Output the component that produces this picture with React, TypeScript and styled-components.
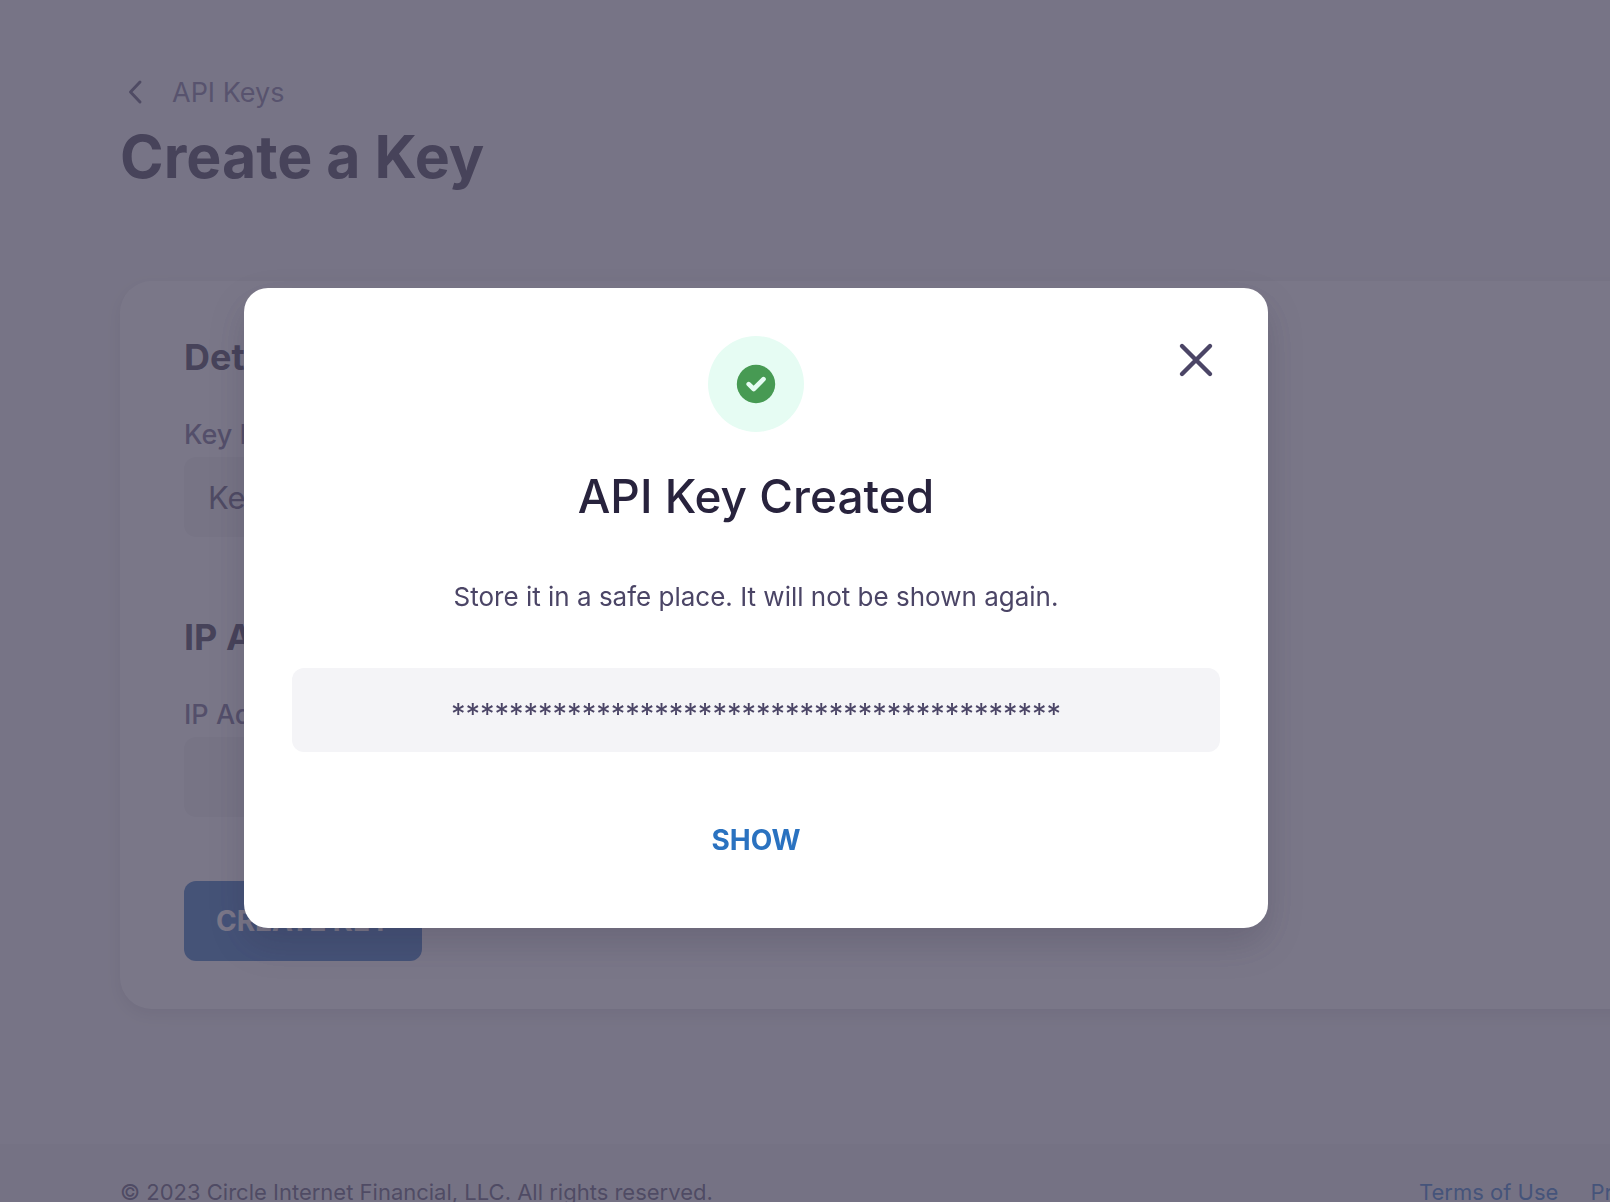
import React, { useState } from "react";
import styled, { createGlobalStyle } from "styled-components";

const GlobalStyle = createGlobalStyle`
  *, *::before, *::after { box-sizing: border-box; }
  body {
    margin: 0;
    overflow: hidden;
    background: #f3f3f5;
    color: #28233d;
    font-family: Inter, "Noto Sans", sans-serif;
  }
  h1, h2, p { margin: 0; }
  button, input { font: inherit; }
`;

const Page = styled.div`
  display: flex;
  flex-direction: column;
  min-width: 1856px;
  min-height: 100vh;
`;

const Main = styled.main`
  padding: 73px 120px 135px;
`;

const BackLink = styled.a`
  display: inline-flex;
  align-items: center;
  gap: 20px;
  color: #6e6890;
  font-size: 27px;
  line-height: 40px;
  text-decoration: none;
`;

const PageTitle = styled.h1`
  margin-top: 8px;
  font-size: 59px;
  font-weight: 700;
  line-height: 72px;
`;

const Card = styled.form`
  margin-top: 88px;
  padding: 54px 64px 48px;
  border-radius: 32px;
  background: #fff;
  box-shadow: 0 6px 16px rgba(40, 35, 61, 0.14);
`;

const Section = styled.section`
  & + & { margin-top: 78px; }
`;

const SectionTitle = styled.h2`
  font-size: 36px;
  font-weight: 700;
  line-height: 44px;
`;

const Label = styled.label`
  display: block;
  margin: 40px 0 6px;
  color: #5d5680;
  font-size: 27px;
  font-weight: 500;
  line-height: 32px;
`;

const TextInput = styled.input`
  display: block;
  width: 100%;
  max-width: 960px;
  height: 80px;
  padding: 0 24px;
  border: 0;
  border-radius: 12px;
  background: #f0f0f2;
  font-size: 31px;
  &::placeholder { color: #4b4566; opacity: 1; }
`;

const Button = styled.button<{ $variant: "primary" | "text" }>`
  height: 80px;
  padding: 0 32px;
  border: 0;
  border-radius: 12px;
  background: ${(p) => (p.$variant === "primary" ? "#2065b8" : "transparent")};
  color: ${(p) => (p.$variant === "primary" ? "#fff" : "#2a72c0")};
  font-size: 28px;
  font-weight: 700;
  cursor: pointer;
`;

const SubmitButton = styled(Button)`
  display: block;
  margin-top: 64px;
`;

const Footer = styled.footer`
  display: flex;
  flex: 1;
  justify-content: space-between;
  padding: 32px 120px;
  background: #ebebee;
  color: #4b4566;
  font-size: 22px;
  line-height: 32px;
`;

const FooterNav = styled.nav`
  display: flex;
  gap: 32px;
`;

const FooterLink = styled.a`
  color: #2069c4;
  text-decoration: none;
`;

const Overlay = styled.div`
  position: fixed;
  inset: 0;
  display: flex;
  align-items: center;
  justify-content: center;
  padding: 14px 98px 0 0;
  background: rgba(81, 77, 100, 0.765);
`;

const Dialog = styled.div`
  position: relative;
  display: flex;
  flex-direction: column;
  align-items: center;
  width: 1024px;
  max-width: 90%;
  padding: 48px;
  border-radius: 24px;
  background: #fff;
  box-shadow: 0 16px 36px rgba(40, 35, 61, 0.2);
`;

const CloseButton = styled.button`
  position: absolute;
  top: 48px;
  right: 48px;
  display: grid;
  place-items: center;
  width: 48px;
  height: 48px;
  padding: 0;
  border: 0;
  background: none;
  color: #4b4566;
  cursor: pointer;
`;

const StatusBadge = styled.div`
  display: grid;
  place-items: center;
  width: 96px;
  height: 96px;
  border-radius: 50%;
  background: #e6fcf3;
`;

const DialogTitle = styled.h2`
  margin-top: 33px;
  color: #28233d;
  font-size: 46px;
  font-weight: 500;
  line-height: 62px;
`;

const DialogText = styled.p`
  margin-top: 49px;
  color: #4b4566;
  font-size: 26px;
  line-height: 42px;
`;

const KeyBox = styled.div`
  align-self: stretch;
  height: 84px;
  margin: 50px 0 48px;
  padding-top: 8px;
  overflow: hidden;
  border-radius: 12px;
  background: #f4f4f7;
  color: #4b4566;
  font-size: 29px;
  line-height: 76px;
  text-align: center;
`;

const MASKED_KEY = "*".repeat(42);

export default function App() {
  const [open, setOpen] = useState(true);
  return (
    <>
      <GlobalStyle />
      <Page>
        <Main>
          <BackLink href="#api-keys">
            <svg width="32" height="32" viewBox="0 0 32 32" fill="none" stroke="#4b4566" strokeWidth="3" strokeLinecap="round" strokeLinejoin="round" aria-hidden="true">
              <path d="M20 5 10.500 15 20 25" />
            </svg>
            API Keys
          </BackLink>
          <PageTitle>Create a Key</PageTitle>
          <Card onSubmit={(e) => e.preventDefault()}>
            <Section>
              <SectionTitle>Details</SectionTitle>
              <Label htmlFor="key-name">Key Name</Label>
              <TextInput id="key-name" placeholder="Key Name" />
            </Section>
            <Section>
              <SectionTitle>IP Allowlist</SectionTitle>
              <Label htmlFor="ip-address">IP Addresses</Label>
              <TextInput id="ip-address" />
            </Section>
            <SubmitButton $variant="primary" type="submit">CREATE KEY</SubmitButton>
          </Card>
        </Main>
        <Footer>
          <p>© 2023 Circle Internet Financial, LLC. All rights reserved.</p>
          <FooterNav>
            <FooterLink href="#terms">Terms of Use</FooterLink>
            <FooterLink href="#privacy">Privacy Policy</FooterLink>
          </FooterNav>
        </Footer>
      </Page>
      {open && (
        <Overlay>
          <Dialog role="dialog" aria-modal="true" aria-labelledby="dialog-title">
            <CloseButton type="button" aria-label="Close" onClick={() => setOpen(false)}>
              <svg width="48" height="48" viewBox="0 0 48 48" fill="none" stroke="currentColor" strokeWidth="4.400" strokeLinecap="round" aria-hidden="true">
                <path d="M10 10 38 38M38 10 10 38" />
              </svg>
            </CloseButton>
            <StatusBadge>
              <svg width="40" height="40" viewBox="0 0 40 40" fill="none" aria-hidden="true">
                <circle cx="20" cy="20" r="19.200" fill="#479a53" />
                <path d="M12.700 20.200 17.700 25 27.500 15.200" stroke="#e6fcf3" strokeWidth="4.600" strokeLinecap="round" strokeLinejoin="round" />
              </svg>
            </StatusBadge>
            <DialogTitle id="dialog-title">API Key Created</DialogTitle>
            <DialogText>Store it in a safe place. It will not be shown again.</DialogText>
            <KeyBox>{MASKED_KEY}</KeyBox>
            <Button $variant="text" type="button">SHOW</Button>
          </Dialog>
        </Overlay>
      )}
    </>
  );
}
